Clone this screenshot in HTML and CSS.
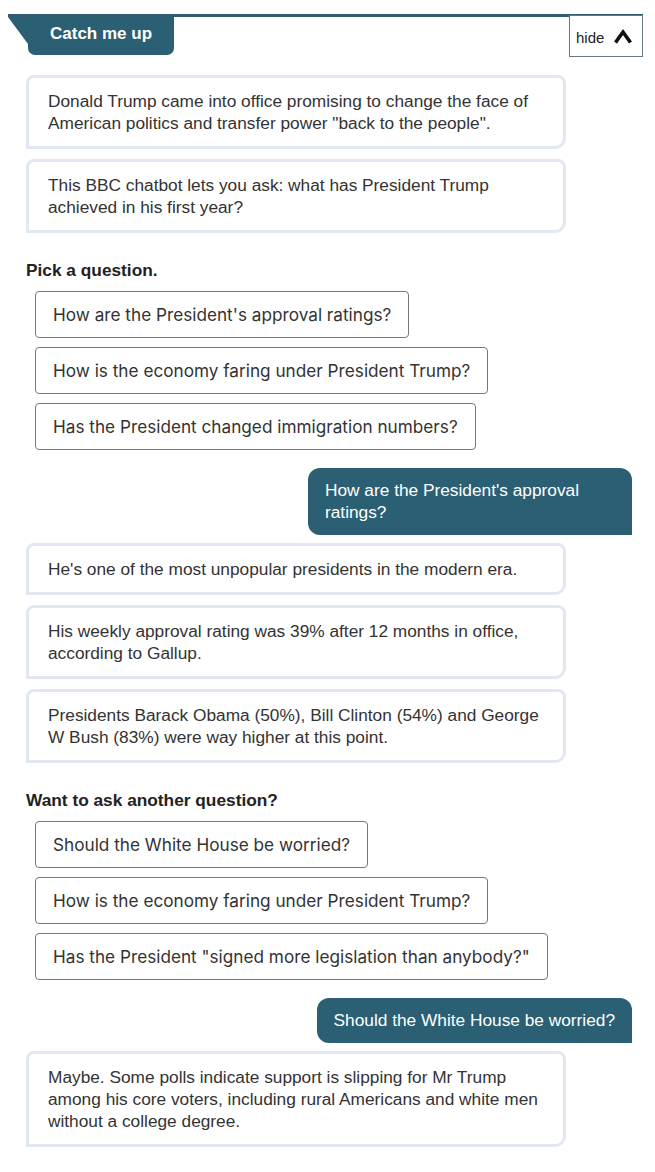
FILE: index.html
```html
<!DOCTYPE html>
<html lang="en">
<head>
<meta charset="utf-8">
<title>Catch me up</title>
<link rel="stylesheet" href="styles.css">
</head>
<body>
<header class="header">
  <div class="tab">
    <svg class="tab-wedge" width="20" height="27" viewBox="0 0 20 27"><polygon points="0,0 20,0 20,27" fill="#2b5f74"/></svg>
    <div class="tab-body">Catch me up</div>
  </div>
  <button class="hide">hide <svg class="chev" width="20" height="16" viewBox="0 0 20 16"><path d="M2.5 14.5 L10 4 L17.5 14.5" fill="none" stroke="#111" stroke-width="3.6" stroke-linejoin="miter"/></svg></button>
</header>
<main class="chat">
  <div class="bot first">Donald Trump came into office promising to change the face of American politics and transfer power "back to the people".</div>
  <div class="bot">This BBC chatbot lets you ask: what has President Trump achieved in his first year?</div>
  <div class="label">Pick a question.</div>
  <div class="options">
    <button class="opt">How are the President's approval ratings?</button>
    <button class="opt">How is the economy faring under President Trump?</button>
    <button class="opt">Has the President changed immigration numbers?</button>
  </div>
  <div class="user">How are the President's approval ratings?</div>
  <div class="bot">He's one of the most unpopular presidents in the modern era.</div>
  <div class="bot">His weekly approval rating was 39% after 12 months in office, according to Gallup.</div>
  <div class="bot">Presidents Barack Obama (50%), Bill Clinton (54%) and George W Bush (83%) were way higher at this point.</div>
  <div class="label">Want to ask another question?</div>
  <div class="options">
    <button class="opt">Should the White House be worried?</button>
    <button class="opt">How is the economy faring under President Trump?</button>
    <button class="opt">Has the President "signed more legislation than anybody?"</button>
  </div>
  <div class="user">Should the White House be worried?</div>
  <div class="bot">Maybe. Some polls indicate support is slipping for Mr Trump among his core voters, including rural Americans and white men without a college degree.</div>
</main>
</body>
</html>
```

FILE: styles.css
```css
* { box-sizing: border-box; }
html, body { margin: 0; padding: 0; background: #fff; }
body {
  width: 655px;
  font-family: "Liberation Sans", Arial, sans-serif;
  color: #333;
  font-size: 17.3px;
  line-height: 22px;
}
.header {
  margin: 14px 12px 0 8px;
  border-top: 3px solid #2f5e70;
  display: flex;
  justify-content: space-between;
  align-items: flex-start;
}
.tab {
  display: flex;
  align-items: flex-start;
}
.tab-wedge { display: block; }
.tab-body {
  background: #2b5f74;
  color: #fff;
  font-weight: bold;
  font-size: 17px;
  height: 38px;
  line-height: 33px;
  padding: 0 22px;
  border-radius: 0 0 7px 7px;
}
.hide {
  width: 74px;
  height: 42px;
  margin: -2px 0 0 0;
  border: 1px solid #5f7a86;
  background: #fff;
  font-family: "Liberation Sans", Arial, sans-serif;
  font-size: 15px;
  color: #222;
  display: flex;
  align-items: center;
  padding: 2px 0 0 6px;
  gap: 9px;
}
.chev { display: block; margin-top: -3px; }
.chat {
  display: flex;
  flex-direction: column;
  align-items: flex-start;
  padding: 0 0 20px 0;
}
.bot {
  margin-left: 26px;
  width: 540px;
  border: 3px solid #e2e8f2;
  border-radius: 8px 8px 11px 0;
  padding: 12px 19px;
  color: #333;
  margin-top: 10px;
}
.bot.first { margin-top: 18px; }
.user + .bot { margin-top: 8px; }
.label {
  margin: 26px 0 0 26px;
  font-weight: bold;
  color: #222;
}
.options {
  margin: 10px 0 0 35px;
  display: flex;
  flex-direction: column;
  align-items: flex-start;
  gap: 9px;
}
.opt {
  height: 47px;
  border: 1px solid #777;
  border-radius: 4px;
  background: #fff;
  font-family: Inter, "Liberation Sans", sans-serif;
  font-size: 17.2px;
  color: #333;
  padding: 0 17px;
  text-align: left;
}
.user {
  align-self: flex-end;
  margin: 18px 23px 0 0;
  max-width: 324px;
  background: #2b5f74;
  color: #fff;
  border-radius: 12px 12px 0 12px;
  padding: 11px 17px 12px 17px;
}
```
